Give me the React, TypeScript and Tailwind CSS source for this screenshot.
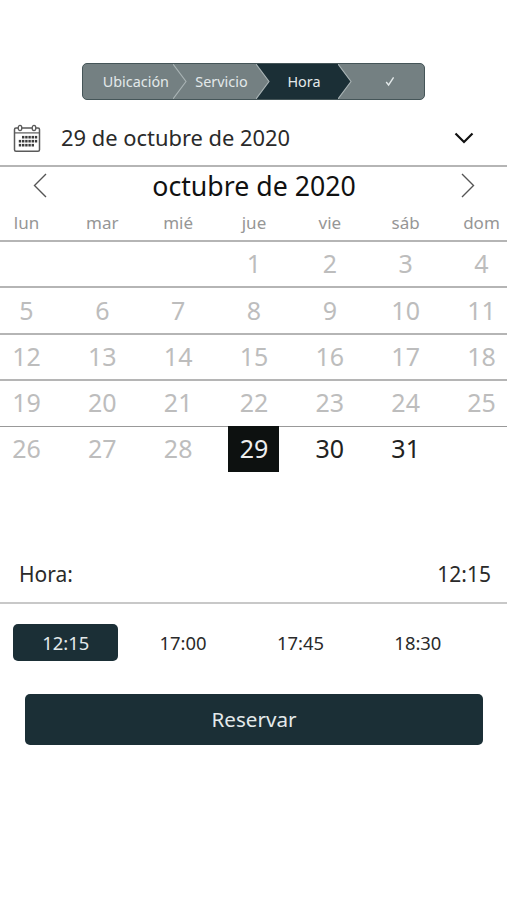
import { useState } from "react";

const WEEKDAYS = ["lun", "mar", "mié", "jue", "vie", "sáb", "dom"];

const WEEKS: (number | null)[][] = [
  [null, null, null, 1, 2, 3, 4],
  [5, 6, 7, 8, 9, 10, 11],
  [12, 13, 14, 15, 16, 17, 18],
  [19, 20, 21, 22, 23, 24, 25],
  [26, 27, 28, 29, 30, 31, null],
];

const TIMES = ["12:15", "17:00", "17:45", "18:30"];

const FIRST_AVAILABLE = 29;

function StepArrow({ from, to }: { from: string; to: string }) {
  return (
    <svg
      className="h-full w-[14px] shrink-0"
      viewBox="0 0 14 35"
      preserveAspectRatio="none"
    >
      <rect width="14" height="35" fill={to} />
      <path d="M-1 0H0L13 17.5L0 35H-1Z" fill={from} />
      <path
        d="M0 0L13 17.5L0 35"
        fill="none"
        stroke="#a9b3b5"
        strokeWidth="1.1"
      />
    </svg>
  );
}

function Stepper() {
  return (
    <div className="mx-auto flex h-[37px] w-[343px] overflow-hidden rounded-[5px] border-[1.5px] border-[#455558] bg-[#748082] text-[14.4px] text-[#e3e9ea]">
      <div className="flex w-[90px] items-center justify-end pr-1">
        Ubicación
      </div>
      <StepArrow from="#748082" to="#748082" />
      <div className="flex w-[69px] items-center justify-center">
        Servicio
      </div>
      <StepArrow from="#748082" to="#1b2f36" />
      <div className="flex w-[68px] items-center justify-center bg-[#1b2f36]">
        Hora
      </div>
      <StepArrow from="#1b2f36" to="#748082" />
      <div className="flex flex-1 items-center justify-center pl-[3px]">
        <svg width="10" height="11" viewBox="0 0 10 11" fill="none">
          <path
            d="M1.2 6L3.6 9L8.6 1.4"
            stroke="#e3e9ea"
            strokeWidth="1.4"
          />
        </svg>
      </div>
    </div>
  );
}

function CalendarIcon() {
  // x of the first dot, number of dots, y
  const rows = [
    [10.2, 5, 13.2],
    [7, 6, 17.2],
    [7, 5, 21.2],
  ];

  return (
    <svg width="28" height="29" viewBox="0 0 28 29" fill="none">
      <rect x="1.5" y="4" width="25" height="23.3" rx="1.5" stroke="#5a5a5a" strokeWidth="1.5" />
      <path d="M1.5 8.9H26.5" stroke="#5a5a5a" strokeWidth="1.2" />
      <ellipse cx="7" cy="4" rx="1.8" ry="2.6" fill="#fff" stroke="#5a5a5a" strokeWidth="1.3" />
      <ellipse cx="21" cy="4" rx="1.8" ry="2.6" fill="#fff" stroke="#5a5a5a" strokeWidth="1.3" />
      {rows.map(([start, count, y]) =>
        Array.from({ length: count }, (_, i) => (
          <rect
            key={`${y}-${i}`}
            x={start + i * 3.2 - 1.2}
            y={y - 1.3}
            width="2.4"
            height="2.6"
            fill="#3c3c3c"
          />
        ))
      )}
    </svg>
  );
}

export default function App() {
  const [day, setDay] = useState(29);
  const [time, setTime] = useState("12:15");

  return (
    <main className="h-[900px] w-[507px] overflow-hidden bg-white pt-[63px] font-['Noto_Sans',sans-serif] text-[#222]">
      <Stepper />

      <div className="flex h-[67px] items-center border-b-2 border-[#b5b5b5] pt-[11px] pr-[33px] pl-[13px]">
        <CalendarIcon />
        <span className="ml-[20px] flex-1 pt-px text-[21.9px] text-[#2a2a2a]">
          {day} de octubre de 2020
        </span>
        <svg width="20" height="12" viewBox="0 0 20 12" fill="none">
          <path d="M1.5 1.5L10 10L18.5 1.5" stroke="#111" strokeWidth="2.2" />
        </svg>
      </div>

      <div className="flex h-[38px] items-center justify-between pr-8 pb-[2px] pl-[33px]">
        <svg width="14" height="25" viewBox="0 0 14 25" fill="none">
          <path d="M13 1L1.5 12.5L13 24" stroke="#555" strokeWidth="1.4" />
        </svg>
        <h2 className="pt-[2px] text-[26.7px] leading-none text-[#111]">
          octubre de 2020
        </h2>
        <svg width="14" height="25" viewBox="0 0 14 25" fill="none">
          <path d="M1 1L12.5 12.5L1 24" stroke="#555" strokeWidth="1.4" />
        </svg>
      </div>

      <div className="flex h-[35px] items-center justify-between pl-px text-[17px] text-[#969696]">
        {WEEKDAYS.map((name) => (
          <span key={name} className="w-[51px] text-center">
            {name}
          </span>
        ))}
      </div>

      {WEEKS.map((week, i) => (
        <div
          key={i}
          className={`flex h-[46.4px] justify-between pl-px text-[25px] ${
            i === WEEKS.length - 1
              ? "border-t border-[#999]"
              : "border-t-2 border-[#b5b5b5]"
          }`}
        >
          {week.map((d, j) => (
            <button
              key={j}
              disabled={!d || d < FIRST_AVAILABLE}
              onClick={() => d && setDay(d)}
              className={`-mt-px w-[51px] text-center leading-[45px] ${
                d === day
                  ? "bg-[#0d1110] text-[#eee]"
                  : d && d >= FIRST_AVAILABLE
                    ? "text-[#222]"
                    : "text-[#bdbdbd]"
              }`}
            >
              {d}
            </button>
          ))}
        </div>
      ))}

      <div className="mt-[72px] flex h-[60px] items-center justify-between border-b-2 border-[#c8c8c8] pt-[3px] pr-4 pl-[19px] text-[21px] text-[#2a2a2a]">
        <span>Hora:</span>
        <span>{time}</span>
      </div>

      <div className="mt-5 flex gap-3 px-[13px]">
        {TIMES.map((t) => (
          <button
            key={t}
            onClick={() => setTime(t)}
            className={`h-[37px] w-[105.4px] rounded-[5px] text-[18.4px] ${
              t === time ? "bg-[#1b2f36] text-[#e3e9ea]" : "text-[#2a2a2a]"
            }`}
          >
            {t}
          </button>
        ))}
      </div>

      <button className="mt-[33px] ml-[25px] block h-[51px] w-[458px] rounded-[5px] bg-[#1b2f36] text-[20.6px] text-[#e3e9ea]">
        Reservar
      </button>
    </main>
  );
}
